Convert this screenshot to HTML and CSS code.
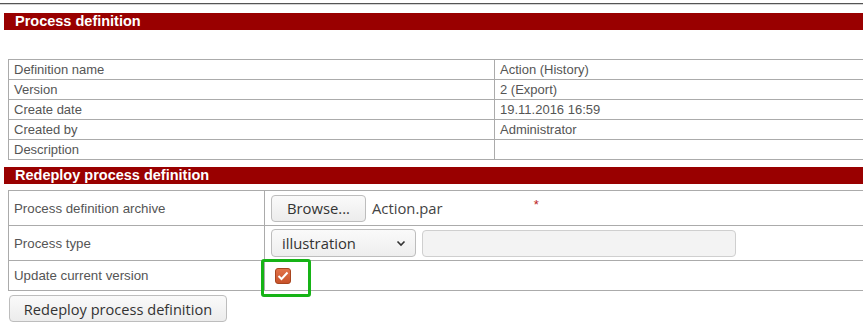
FILE: index.html
```html
<!DOCTYPE html>
<html>
<head>
<meta charset="utf-8">
<link rel="stylesheet" href="styles.css">
</head>
<body>
<div class="page">
  <div class="topline"></div>
  <div class="section-title first">Process definition</div>
  <table class="info">
    <tr><td class="lbl">Definition name</td><td>Action (History)</td></tr>
    <tr><td class="lbl">Version</td><td>2 (Export)</td></tr>
    <tr><td class="lbl">Create date</td><td>19.11.2016 16:59</td></tr>
    <tr><td class="lbl">Created by</td><td>Administrator</td></tr>
    <tr><td class="lbl">Description</td><td></td></tr>
  </table>
  <div class="section-title second">Redeploy process definition</div>
  <table class="form">
    <tr class="r1">
      <td class="lbl">Process definition archive</td>
      <td>
        <div class="cell-row">
          <button class="btn browse">Browse...</button>
          <span class="filename">Action.par</span>
          <span class="req">*</span>
        </div>
      </td>
    </tr>
    <tr class="r2">
      <td class="lbl">Process type</td>
      <td>
        <div class="cell-row">
          <div class="select">
            <span>illustration</span>
            <svg class="chev" width="10" height="7" viewBox="0 0 10 7"><path d="M1.5 1.5 L5 5 L8.5 1.5" fill="none" stroke="#333" stroke-width="1.6"/></svg>
          </div>
          <div class="textinput"></div>
        </div>
      </td>
    </tr>
    <tr class="r3">
      <td class="lbl">Update current version</td>
      <td>
        <div class="cb-wrap">
          <span class="checkbox">
            <svg width="12" height="10" viewBox="0 0 12 10"><path d="M1.5 5 L4.5 8 L10.5 1.5" fill="none" stroke="#fff" stroke-width="2"/></svg>
          </span>
          <span class="highlight"></span>
        </div>
      </td>
    </tr>
  </table>
  <button class="btn redeploy">Redeploy process definition</button>
</div>
</body>
</html>
```
FILE: styles.css
```css
html, body {
  margin: 0;
  padding: 0;
  background: #fff;
  overflow: hidden;
}
.page {
  width: 863px;
  height: 327px;
  overflow: hidden;
  font-family: "Liberation Sans", Arial, sans-serif;
}
.topline {
  margin-top: 3px;
  height: 0;
  border-top: 1px solid #555;
  border-bottom: 1px solid #d4d4d4;
}
.section-title {
  margin-left: 4px;
  height: 17px;
  line-height: 17px;
  background: #990000;
  color: #fff;
  font-weight: bold;
  font-size: 14.5px;
  padding-left: 11px;
}
.section-title.first {
  margin-top: 8px;
}
.section-title.second {
  margin-top: 7px;
}
table {
  border-collapse: collapse;
  margin-left: 8px;
  width: 870px;
}
td {
  border: 1px solid #ababab;
  padding: 0 0 0 5px;
  color: #555;
  font-size: 13px;
}
.info {
  margin-top: 29px;
}
.info td {
  height: 19px;
}
.info td.lbl {
  width: 480px;
}
.form {
  margin-top: 6px;
}
.form td.lbl {
  width: 250px;
  font-size: 13.3px;
}
.form tr.r1 td { height: 34px; }
.form tr.r2 td { height: 34px; }
.form tr.r3 td { height: 29px; }
.cell-row {
  display: flex;
  align-items: center;
}
.btn {
  font-family: "Open Sans", "DejaVu Sans", sans-serif;
  color: #333;
  background: linear-gradient(#fafafa, #ececec);
  border: 1px solid #bdbdbd;
  border-radius: 4px;
  padding: 0;
}
.browse {
  width: 95px;
  height: 27px;
  font-size: 14.8px;
  margin-left: 1px;
}
.filename {
  font-family: "Open Sans", "DejaVu Sans", sans-serif;
  font-size: 14.8px;
  color: #444;
  margin-left: 6px;
}
.req {
  color: #b22;
  font-size: 13px;
  margin-left: 91px;
  align-self: flex-start;
  margin-top: 2px;
}
.select {
  margin-left: 1px;
  width: 145px;
  height: 28px;
  box-sizing: border-box;
  border: 1px solid #bdbdbd;
  border-radius: 4px;
  background: linear-gradient(#fafafa, #eeeeee);
  display: flex;
  align-items: center;
  justify-content: space-between;
  padding: 0 9px 0 10px;
  font-family: "Open Sans", "DejaVu Sans", sans-serif;
  font-size: 14.8px;
  color: #333;
}
.textinput {
  margin-left: 6px;
  width: 314px;
  height: 27px;
  box-sizing: border-box;
  border: 1px solid #cfcfcf;
  border-radius: 4px;
  background: #f3f3f3;
}
.cb-wrap {
  position: relative;
  height: 28px;
  display: flex;
  align-items: center;
}
.checkbox {
  margin-left: 5px;
  width: 16px;
  height: 16px;
  border-radius: 3px;
  background: linear-gradient(#e27249, #c8522a);
  border: 1px solid #a8451f;
  box-sizing: border-box;
  display: flex;
  align-items: center;
  justify-content: center;
}
.highlight {
  position: absolute;
  left: -9px;
  top: -3px;
  width: 44px;
  height: 32px;
  border: 3px solid #16b316;
  border-radius: 3px;
}
.redeploy {
  display: block;
  margin: 4px 0 0 9px;
  width: 218px;
  height: 27px;
  font-size: 14.6px;
}
```
